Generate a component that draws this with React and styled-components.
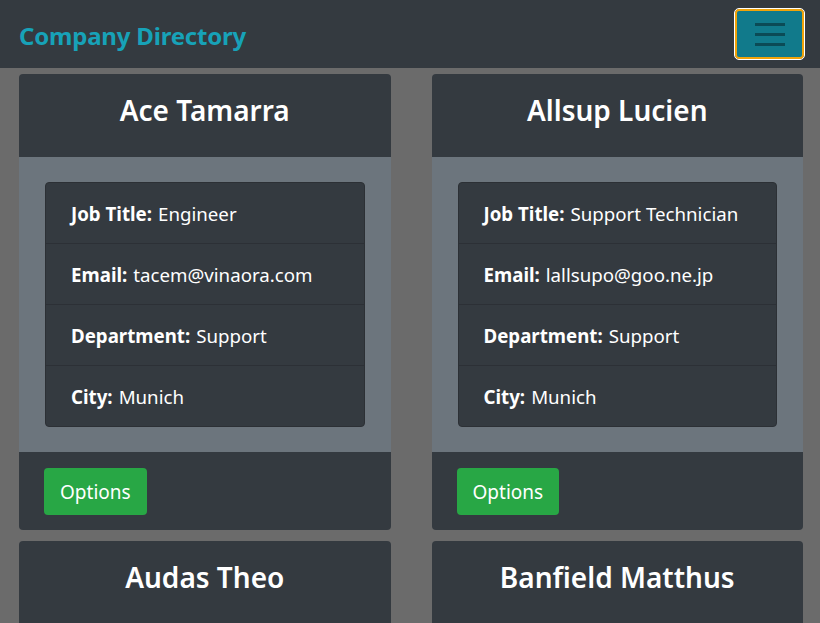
import styled, { createGlobalStyle } from "styled-components";

const people = [
  { name: "Ace Tamarra", job: "Engineer", email: "tacem@vinaora.com", dept: "Support", city: "Munich" },
  { name: "Allsup Lucien", job: "Support Technician", email: "lallsupo@goo.ne.jp", dept: "Support", city: "Munich" },
  { name: "Audas Theo", job: "Sales Manager", email: "taudas@example.com", dept: "Sales", city: "Munich" },
  { name: "Banfield Matthus", job: "Accountant", email: "mbanfield@example.com", dept: "Accounting", city: "Munich" },
];

const GlobalStyle = createGlobalStyle`
  html, body {
    margin: 0;
    background: #6b6b6b;
    font-family: "Noto Sans", "Open Sans", sans-serif;
    overflow: hidden;
  }
  * { box-sizing: border-box; }
`;

export default function App() {
  return (
    <>
      <GlobalStyle />
      <Navbar>
        <Brand>Company Directory</Brand>
        <Toggler aria-label="menu">
          <Bar />
          <Bar />
          <Bar />
        </Toggler>
      </Navbar>
      <Grid>
        {people.map((p) => (
          <Card key={p.name}>
            <CardHeader>{p.name}</CardHeader>
            <CardBody>
              <ListGroup>
                <ListItem><b>Job Title:</b> {p.job}</ListItem>
                <ListItem><b>Email:</b> {p.email}</ListItem>
                <ListItem><b>Department:</b> {p.dept}</ListItem>
                <ListItem><b>City:</b> {p.city}</ListItem>
              </ListGroup>
            </CardBody>
            <CardFooter>
              <Button>Options</Button>
            </CardFooter>
          </Card>
        ))}
      </Grid>
    </>
  );
}

const Navbar = styled.nav`
  height: 68px;
  background: #343a40;
  display: flex;
  align-items: center;
  justify-content: space-between;
  padding: 0 16px 0 19px;
`;
const Brand = styled.div`
  color: #17a2b8;
  font-size: 24px;
  font-weight: 700;
  letter-spacing: -0.2px;
  padding-top: 2px;
`;
const Toggler = styled.button`
  width: 69px;
  height: 50px;
  background: #117a8b;
  border: 2px solid #f0a30a;
  outline: 1px solid #ffffff;
  border-radius: 4px;
  display: flex;
  flex-direction: column;
  align-items: center;
  justify-content: center;
  gap: 7px;
  padding: 0;
`;
const Bar = styled.span`
  display: block;
  width: 30px;
  height: 3px;
  background: #0b4b56;
`;
const Grid = styled.main`
  display: grid;
  grid-template-columns: 1fr 1fr;
  column-gap: 41px;
  row-gap: 11px;
  padding: 6px 17px 0 19px;
`;
const Card = styled.section`
  background: #343a40;
  border-radius: 4px;
  overflow: hidden;
`;
const CardHeader = styled.h2`
  margin: 0;
  height: 83px;
  display: flex;
  align-items: center;
  justify-content: center;
  padding-bottom: 12px;
  color: #ffffff;
  font-size: 28px;
  font-weight: 600;
`;
const CardBody = styled.div`
  background: #6c757d;
  padding: 25px 26px 25px 26px;
`;
const ListGroup = styled.ul`
  margin: 0;
  padding: 0;
  list-style: none;
  background: #343a40;
  border-radius: 4px;
  border: 1px solid #2c3035;
`;
const ListItem = styled.li`
  height: 60px;
  box-sizing: content-box;
  display: flex;
  align-items: center;
  gap: 6px;
  padding: 0 25px;
  color: #ffffff;
  font-size: 18.7px;
  white-space: nowrap;
  & + & {
    border-top: 1px solid #2c3036;
  }
  b { font-weight: 700; }
`;
const CardFooter = styled.div`
  height: 78px;
  padding: 16px 25px;
`;
const Button = styled.button`
  height: 47px;
  padding: 0 16px;
  background: #28a745;
  color: #ffffff;
  border: none;
  border-radius: 4px;
  font-family: inherit;
  font-size: 19px;
`;
